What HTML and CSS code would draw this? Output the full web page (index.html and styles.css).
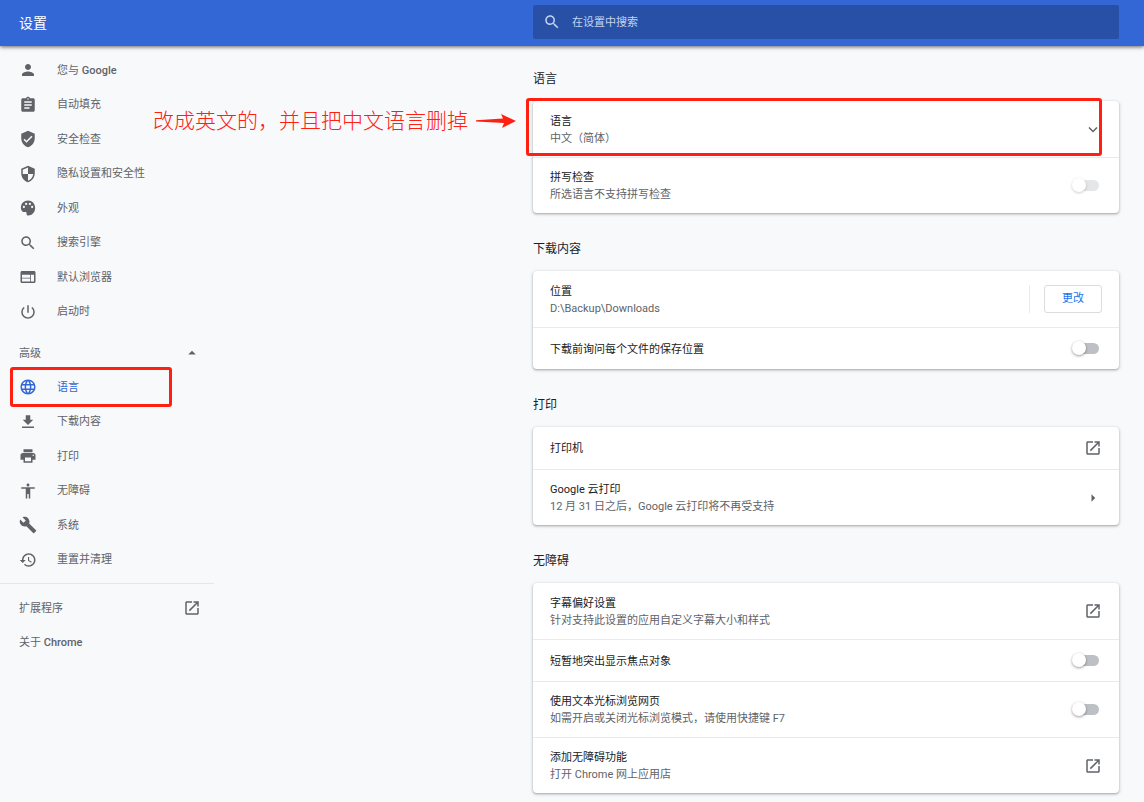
FILE: index.html
```html
<!DOCTYPE html>
<html lang="zh-CN">
<head>
<meta charset="utf-8">
<meta name="viewport" content="width=device-width, initial-scale=1">
<title>设置</title>
<link rel="stylesheet" href="styles.css">
</head>
<body>
<svg class="sprite" aria-hidden="true">
  <symbol id="open" viewBox="0 0 24 24"><path d="M19 19H5V5h7V3H5c-1.110 0-2 .9-2 2v14c0 1.100.89 2 2 2h14c1.100 0 2-.9 2-2v-7h-2v7zM14 3v2h3.590l-9.830 9.830 1.410 1.410L19 6.410V10h2V3h-7z"/></symbol>
  <symbol id="search" viewBox="0 0 24 24"><path d="M15.500 14h-.79l-.28-.27C15.410 12.590 16 11.110 16 9.500 16 5.910 13.090 3 9.500 3S3 5.910 3 9.500 5.910 16 9.500 16c1.610 0 3.090-.59 4.230-1.570l.27.28v.79l5 4.990L20.490 19l-4.990-5zm-6 0C7.010 14 5 11.990 5 9.500S7.010 5 9.500 5 14 7.010 14 9.500 11.990 14 9.500 14z"/></symbol>
</svg>

<header class="toolbar">
  <h1 class="toolbar-title">设置</h1>
  <label class="search">
    <svg class="icon"><use href="#search"/></svg>
    <input class="search-input" type="search" placeholder="在设置中搜索" aria-label="在设置中搜索">
  </label>
</header>

<div class="layout">
  <nav class="sidebar" aria-label="设置">
    <ul class="menu menu-basic">
      <li><a class="menu-link" href="#people"><svg class="icon" viewBox="0 0 24 24"><path d="M12 12c2.210 0 4-1.790 4-4s-1.790-4-4-4-4 1.790-4 4 1.790 4 4 4zm0 2c-2.670 0-8 1.340-8 4v2h16v-2c0-2.660-5.330-4-8-4z"/></svg><span>您与 <b class="latin">Google</b></span></a></li>
      <li><a class="menu-link" href="#autofill"><svg class="icon" viewBox="0 0 24 24"><path d="M19 3h-4.180C14.400 1.840 13.300 1 12 1c-1.300 0-2.400.84-2.820 2H5c-1.100 0-2 .9-2 2v14c0 1.100.9 2 2 2h14c1.100 0 2-.9 2-2V5c0-1.100-.9-2-2-2zm-7 0c.55 0 1 .45 1 1s-.45 1-1 1-1-.45-1-1 .45-1 1-1zm2 14H7v-2h7v2zm3-4H7v-2h10v2zm0-4H7V7h10v2z"/></svg><span>自动填充</span></a></li>
      <li><a class="menu-link" href="#safety"><svg class="icon" viewBox="0 0 24 24"><path d="M12 1L3 5v6c0 5.550 3.840 10.740 9 12 5.160-1.260 9-6.450 9-12V5l-9-4zm-2 16l-4-4 1.410-1.410L10 14.170l6.590-6.590L18 9l-8 8z"/></svg><span>安全检查</span></a></li>
      <li><a class="menu-link" href="#privacy"><svg class="icon" viewBox="0 0 24 24"><path d="M12 1L3 5v6c0 5.550 3.840 10.740 9 12 5.160-1.260 9-6.450 9-12V5l-9-4zm0 10.990h7c-.53 4.120-3.280 7.790-7 8.940V12H5V6.300l7-3.110v8.800z"/></svg><span>隐私设置和安全性</span></a></li>
      <li><a class="menu-link" href="#appearance"><svg class="icon" viewBox="0 0 24 24"><path d="M12 2C6.500 2 2.500 6 2.500 11.500c0 4.300 2.700 6.300 5.300 5.900 1.500-.2 2.600.5 2.300 2.100-.3 1.500.6 2.500 2.100 2.500 5.300 0 9.300-4.500 9.300-10C21.500 6 17.500 2 12 2zM6.500 12A1.500 1.500 0 1 1 6.500 9a1.500 1.500 0 0 1 0 3zm3-4A1.500 1.500 0 1 1 9.500 5a1.500 1.500 0 0 1 0 3zm5 0A1.500 1.500 0 1 1 14.500 5a1.500 1.500 0 0 1 0 3zm3 4A1.500 1.500 0 1 1 17.500 9a1.500 1.500 0 0 1 0 3z"/></svg><span>外观</span></a></li>
      <li><a class="menu-link" href="#search-engine"><svg class="icon"><use href="#search"/></svg><span>搜索引擎</span></a></li>
      <li><a class="menu-link" href="#browser"><svg class="icon" viewBox="0 0 24 24"><path d="M20 4H4c-1.100 0-1.990.9-1.990 2L2 18c0 1.100.9 2 2 2h16c1.100 0 2-.9 2-2V6c0-1.100-.9-2-2-2zm-5 14H4v-4h11v4zm0-5H4V9h11v4zm5 5h-4V9h4v9z"/></svg><span>默认浏览器</span></a></li>
      <li><a class="menu-link" href="#startup"><svg class="icon" viewBox="0 0 24 24"><path d="M13 3h-2v10h2V3zm4.830 2.170l-1.420 1.420C17.990 7.860 19 9.810 19 12c0 3.870-3.130 7-7 7s-7-3.130-7-7c0-2.190 1.010-4.140 2.580-5.420L6.170 5.170C4.230 6.820 3 9.260 3 12c0 4.970 4.030 9 9 9s9-4.030 9-9c0-2.740-1.230-5.180-3.170-6.830z"/></svg><span>启动时</span></a></li>
    </ul>
    <button class="menu-toggle" type="button" aria-expanded="true"><span>高级</span><svg class="icon" viewBox="0 0 24 24"><path d="M7 14l5-5 5 5z"/></svg></button>
    <ul class="menu menu-advanced">
      <li class="marked"><a class="menu-link selected" href="#languages" aria-current="page"><svg class="icon" viewBox="0 0 24 24"><path d="M11.990 2C6.470 2 2 6.480 2 12s4.470 10 9.990 10C17.520 22 22 17.520 22 12S17.520 2 11.990 2zm6.930 6h-2.950c-.32-1.250-.78-2.450-1.380-3.560 1.840.63 3.370 1.910 4.330 3.560zM12 4.040c.83 1.200 1.480 2.530 1.910 3.960h-3.820c.43-1.430 1.080-2.760 1.910-3.960zM4.260 14C4.100 13.360 4 12.690 4 12s.1-1.360.26-2h3.380c-.08.66-.14 1.320-.14 2s.06 1.340.14 2H4.260zm.82 2h2.950c.32 1.250.78 2.450 1.380 3.560-1.840-.63-3.370-1.900-4.330-3.560zm2.950-8H5.080c.96-1.660 2.490-2.930 4.330-3.560C8.810 5.550 8.350 6.750 8.030 8zM12 19.960c-.83-1.200-1.480-2.530-1.910-3.960h3.820c-.43 1.430-1.080 2.760-1.910 3.960zM14.340 14H9.660c-.09-.66-.16-1.320-.16-2s.07-1.350.16-2h4.680c.09.65.16 1.320.16 2s-.07 1.340-.16 2zm.25 5.560c.6-1.110 1.060-2.310 1.380-3.560h2.950c-.96 1.650-2.490 2.930-4.330 3.560zM16.360 14c.08-.66.14-1.320.14-2s-.06-1.340-.14-2h3.380c.16.64.26 1.310.26 2s-.1 1.360-.26 2h-3.380z"/></svg><span>语言</span></a></li>
      <li><a class="menu-link" href="#downloads"><svg class="icon" viewBox="0 0 24 24"><path d="M19 9h-4V3H9v6H5l7 7 7-7zM4 18v2h16v-2H4z"/></svg><span>下载内容</span></a></li>
      <li><a class="menu-link" href="#printing"><svg class="icon" viewBox="0 0 24 24"><path d="M19 8H5c-1.660 0-3 1.340-3 3v6h4v4h12v-4h4v-6c0-1.660-1.340-3-3-3zm-3 11H8v-5h8v5zm3-7c-.55 0-1-.45-1-1s.45-1 1-1 1 .45 1 1-.45 1-1 1zm-1-9H6v4h12V3z"/></svg><span>打印</span></a></li>
      <li><a class="menu-link" href="#a11y"><svg class="icon" viewBox="0 0 24 24"><path d="M12 2c1.100 0 2 .9 2 2s-.9 2-2 2-2-.9-2-2 .9-2 2-2zm9 7h-6v13h-2v-6h-2v6H9V9H3V7h18v2z"/></svg><span>无障碍</span></a></li>
      <li><a class="menu-link" href="#system"><svg class="icon" viewBox="0 0 24 24"><path d="M22.700 19l-9.100-9.100c.9-2.300.4-5-1.500-6.900-2-2-5-2.400-7.400-1.300L9 6 6 9 1.600 4.700C.4 7.100.9 10.100 2.900 12.100c1.900 1.900 4.600 2.400 6.900 1.500l9.100 9.100c.4.400 1 .4 1.400 0l2.300-2.300c.5-.4.5-1.100.1-1.400z"/></svg><span>系统</span></a></li>
      <li><a class="menu-link" href="#reset"><svg class="icon" viewBox="0 0 24 24"><path d="M13 3c-4.970 0-9 4.030-9 9H1l3.890 3.890.07.14L9 12H6c0-3.870 3.130-7 7-7s7 3.130 7 7-3.130 7-7 7c-1.930 0-3.680-.79-4.940-2.060l-1.420 1.420C8.270 19.990 10.510 21 13 21c4.970 0 9-4.030 9-9s-4.030-9-9-9zm-1 5v5l4.280 2.540.72-1.210-3.500-2.080V8H12z"/></svg><span>重置并清理</span></a></li>
    </ul>
    <div class="menu-footer">
      <a class="footer-link" href="#extensions"><span>扩展程序</span><svg class="icon"><use href="#open"/></svg></a>
      <a class="footer-link" href="#about"><span>关于 <b class="latin">Chrome</b></span></a>
    </div>
  </nav>

  <main class="content">
    <section class="section" id="languages">
      <h2 class="section-title">语言</h2>
      <div class="card">
        <div class="row-frame">
          <button class="row" type="button" aria-expanded="false">
            <span class="text"><span class="title">语言</span><span class="detail">中文（简体）</span></span>
            <svg class="icon" viewBox="0 0 24 24"><path d="M7.400 9.300L12 13.900l4.600-4.600L18 10.700l-6 6-6-6z"/></svg>
          </button>
          <p class="note"><span>改成英文的，并且把中文语言删掉</span><svg class="arrow" viewBox="0 0 40 16" aria-hidden="true"><path d="M0 7.200L27 5.500 25 1l15 7-14 7 2-5L0 8.600z"/></svg></p>
        </div>
        <div class="row">
          <label class="text" for="spell"><span class="title">拼写检查</span><span class="detail">所选语言不支持拼写检查</span></label>
          <input class="switch" id="spell" type="checkbox" disabled>
        </div>
      </div>
    </section>

    <section class="section" id="downloads">
      <h2 class="section-title">下载内容</h2>
      <div class="card">
        <div class="row">
          <div class="text"><span class="title">位置</span><span class="detail">D:\Backup\Downloads</span></div>
          <div class="action"><button class="button" type="button">更改</button></div>
        </div>
        <div class="row row-single">
          <label class="text" for="ask"><span class="title">下载前询问每个文件的保存位置</span></label>
          <input class="switch" id="ask" type="checkbox">
        </div>
      </div>
    </section>

    <section class="section" id="printing">
      <h2 class="section-title">打印</h2>
      <div class="card">
        <button class="row row-single" type="button"><span class="text"><span class="title">打印机</span></span><svg class="icon"><use href="#open"/></svg></button>
        <button class="row" type="button"><span class="text"><span class="title">Google 云打印</span><span class="detail">12 月 31 日之后，Google 云打印将不再受支持</span></span><svg class="icon" viewBox="0 0 24 24"><path d="M10 7l5 5-5 5z"/></svg></button>
      </div>
    </section>

    <section class="section" id="a11y">
      <h2 class="section-title">无障碍</h2>
      <div class="card">
        <button class="row" type="button"><span class="text"><span class="title">字幕偏好设置</span><span class="detail">针对支持此设置的应用自定义字幕大小和样式</span></span><svg class="icon"><use href="#open"/></svg></button>
        <div class="row row-single">
          <label class="text" for="focus"><span class="title">短暂地突出显示焦点对象</span></label>
          <input class="switch" id="focus" type="checkbox">
        </div>
        <div class="row">
          <label class="text" for="caret"><span class="title">使用文本光标浏览网页</span><span class="detail">如需开启或关闭光标浏览模式，请使用快捷键 F7</span></label>
          <input class="switch" id="caret" type="checkbox">
        </div>
        <a class="row" href="#store"><span class="text"><span class="title">添加无障碍功能</span><span class="detail">打开 Chrome 网上应用店</span></span><svg class="icon"><use href="#open"/></svg></a>
      </div>
    </section>
  </main>
</div>
</body>
</html>
```

FILE: styles.css
```css
:root {
  --blue: #3367d6;
  --text: #202124;
  --muted: #5f6368;
  --line: #e8eaed;
  --mark: #ff2012;
  --gutter: 25px;
  --content-start: 533px;
}

* { box-sizing: border-box; }

body {
  margin: 0;
  background: #f8f9fb;
  color: var(--text);
  font: 11px/18px Roboto, "Noto Sans CJK SC", sans-serif;
}

h1, h2, p, ul { margin: 0; padding: 0; font-weight: 400; }
ul { list-style: none; }
a { color: inherit; text-decoration: none; }
button, input { font: inherit; color: inherit; }
button { border: 0; background: none; padding: 0; text-align: left; cursor: pointer; }

.sprite { position: absolute; width: 0; height: 0; }
.icon { width: 18px; height: 18px; flex: none; fill: currentColor; }
.latin { font-weight: 500; }

/* Toolbar */
.toolbar {
  display: grid;
  grid-template-columns: var(--content-start) minmax(0, 1fr);
  align-items: start;
  height: 46px;
  padding: 5px var(--gutter) 0 0;
  background: var(--blue);
  box-shadow: 0 1px 4px rgba(0, 0, 0, .6);
  color: #fff;
}
.toolbar-title { padding-left: 19px; font-size: 14px; line-height: 37px; }
.search {
  display: flex;
  align-items: center;
  gap: 11px;
  height: 34px;
  padding: 0 10px;
  border-radius: 2px;
  background: #2850a7;
  color: #c5d2ee;
}
.search-input { flex: 1; min-width: 0; border: 0; outline: 0; padding: 2px 0 0; background: none; appearance: none; }
.search-input::placeholder { color: inherit; opacity: 1; }

/* Page columns */
.layout {
  display: grid;
  grid-template-columns: 214px minmax(0, 1fr);
  column-gap: calc(var(--content-start) - 214px);
  padding-right: var(--gutter);
}

/* Sidebar */
.sidebar { padding-top: 7px; color: var(--muted); }
.sidebar span { padding-top: 1px; }
.menu { display: grid; grid-auto-rows: 1fr; }
.menu-basic { min-height: 276px; }
.menu-advanced { min-height: 207px; }
.menu-link { display: flex; align-items: center; gap: 20px; height: 100%; padding-left: 19px; }
.selected { color: var(--blue); }
.menu-toggle, .footer-link {
  display: flex;
  align-items: center;
  justify-content: space-between;
  width: 100%;
  padding: 0 13px 0 19px;
}
.menu-toggle { height: 34px; margin: 7px 0 0; }
.menu-footer { margin-top: 6px; padding-top: 7px; border-top: 1px solid #e4e6e9; }
.footer-link { height: 34px; }

/* Hand-drawn review marks */
.marked, .row-frame { position: relative; }
.marked::after, .row-frame::after {
  content: "";
  position: absolute;
  border: 3px solid var(--mark);
  border-radius: 3px;
  pointer-events: none;
}
.marked::after { inset: -3px 42px -2px 10px; }
.row-frame::after { inset: -3px 17px 1px -7px; }
.note {
  position: absolute;
  top: 5px;
  right: calc(100% + 17px);
  display: flex;
  align-items: center;
  gap: 8px;
  color: var(--mark);
  font-size: 21px;
  font-weight: 300;
  line-height: 30px;
  white-space: nowrap;
}
.arrow { width: 40px; height: 16px; fill: currentColor; }

/* Sections */
.content { padding: 21px 0 8px; }
.section + .section { margin-top: 24px; }
.section-title { margin-bottom: 10px; font-size: 12px; line-height: 24px; }
.card {
  border-radius: 4px;
  background: #fff;
  box-shadow: 0 1px 2px rgba(60, 64, 67, .3), 0 1px 3px 1px rgba(60, 64, 67, .15);
}
.row {
  display: flex;
  align-items: center;
  justify-content: space-between;
  width: 100%;
  min-height: 56px;
  padding: 0 17px;
}
.row-single { min-height: 42px; }
.card > * + * { border-top: 1px solid var(--line); }
.text { display: flex; flex-direction: column; min-width: 0; padding-top: 1px; line-height: 17px; }
.detail { color: var(--muted); }
.row > .icon { color: var(--muted); }

.action { padding-left: 14px; border-left: 1px solid var(--line); }
.button {
  display: block;
  min-width: 58px;
  height: 28px;
  border: 1px solid #dadce0;
  border-radius: 3px;
  color: #1a73e8;
  text-align: center;
}

.switch { position: relative; width: 27px; height: 14px; margin: 0 3px 1px 0; appearance: none; cursor: pointer; }
.switch::before, .switch::after { content: ""; position: absolute; }
.switch::before { inset: 2px 0 1px 3px; border-radius: 6px; background: #bdc1c6; }
.switch::after {
  inset: 0 13px 0 0;
  border-radius: 50%;
  background: #fff;
  box-shadow: 0 1px 3px rgba(0, 0, 0, .4);
}
.switch:checked::before { background: #8ab4f8; }
.switch:checked::after { inset: 0 0 0 13px; background: #1a73e8; }
.switch:disabled::before { background: #e5e6e8; }
.switch:disabled::after { box-shadow: 0 1px 3px rgba(0, 0, 0, .2); }
```
